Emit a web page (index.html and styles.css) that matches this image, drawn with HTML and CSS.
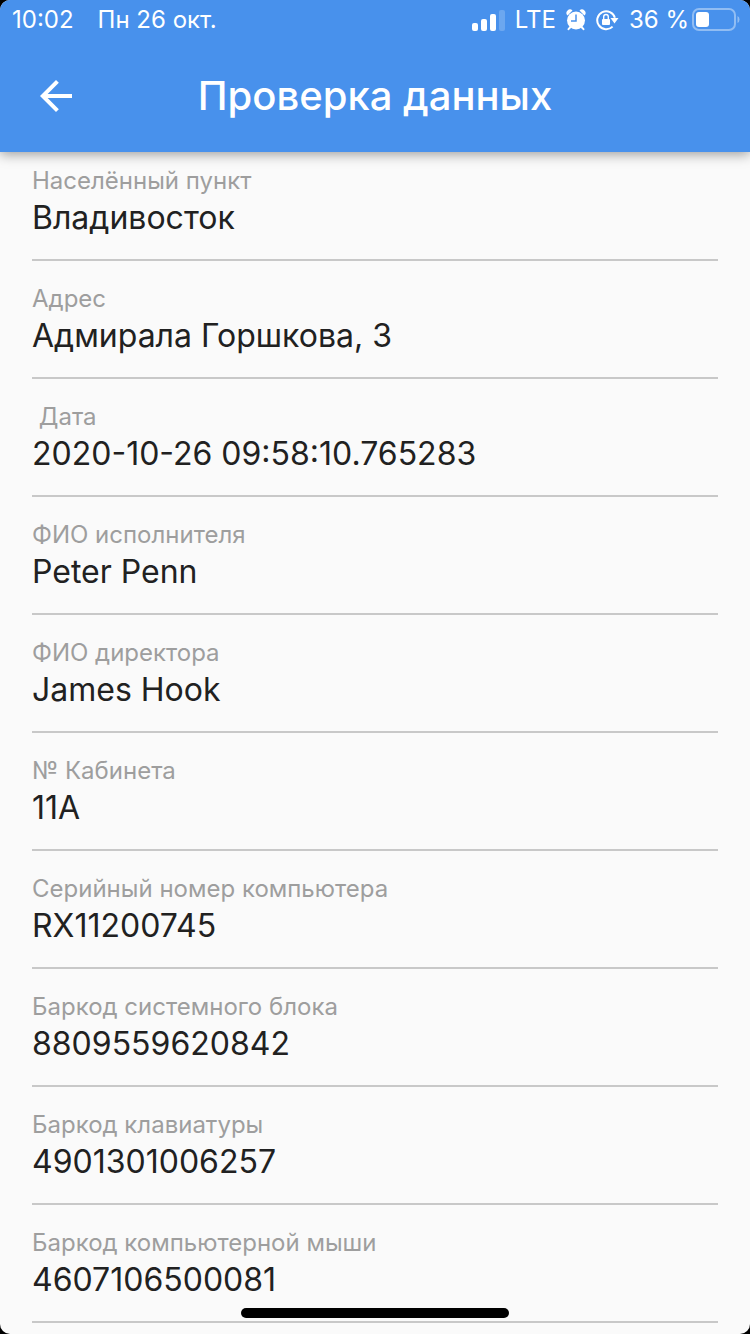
FILE: index.html
```html
<!DOCTYPE html>
<html lang="ru">
<head>
<meta charset="utf-8">
<meta name="viewport" content="width=device-width, initial-scale=1">
<title>Проверка данных</title>
<link rel="stylesheet" href="styles.css">
</head>
<body>
<div class="screen">
  <header class="header">
    <div class="status">
      <div class="status-group status-clock">
        <span>10:02</span>
        <span>Пн 26 окт.</span>
      </div>
      <div class="status-group">
        <svg class="signal" viewBox="0 0 33 22" width="33" height="22" fill="#fff" aria-hidden="true">
          <rect x="0" y="14" width="6" height="8" rx="2"/>
          <rect x="9" y="10" width="6" height="12" rx="2"/>
          <rect x="18" y="5" width="6" height="17" rx="2"/>
          <rect x="27" y="1" width="6" height="21" rx="2" opacity=".2"/>
        </svg>
        <span>LTE</span>
        <svg class="alarm" viewBox="0 0 20 22" width="20" height="22" aria-hidden="true">
          <path d="M1.500 6.500A3.500 3.500 0 0 1 6.500 1.600zM13.500 1.600a3.500 3.500 0 0 1 5 4.900z" fill="#fff"/>
          <path d="M4.500 18 2.500 20.200M15.500 18l2 2.200" stroke="#fff" stroke-width="2" stroke-linecap="round"/>
          <circle cx="10" cy="11.500" r="9" fill="#fff"/>
          <path d="M10 5.500v6.500H5" fill="none" stroke="#4891ec" stroke-width="1.500"/>
        </svg>
        <svg class="lock" viewBox="0 0 23 22" width="23" height="22" aria-hidden="true">
          <path d="M18.900 8.800A9 9 0 1 0 16.600 17.600" fill="none" stroke="#fff" stroke-width="2"/>
          <path d="M14.500 9h8l-4 5.400z" fill="#fff"/>
          <rect x="6" y="10" width="8" height="6" rx="1" fill="#fff"/>
          <path d="M7.700 10V7.800a2.300 2.300 0 0 1 4.600 0V10" fill="none" stroke="#fff" stroke-width="1.400"/>
        </svg>
        <span class="charge">36 %</span>
        <svg class="battery" viewBox="0 0 48 24" width="48" height="24" aria-hidden="true">
          <rect x="1" y="1" width="42" height="21" rx="6" fill="none" stroke="#fff" stroke-width="2" opacity=".4"/>
          <rect x="4" y="4" width="13" height="15" rx="3" fill="#fff"/>
          <path d="M45.500 8q2 .8 2 3.500t-2 3.500z" fill="#fff" opacity=".4"/>
        </svg>
      </div>
    </div>
    <div class="toolbar">
      <button class="back" type="button" aria-label="Назад">
        <svg viewBox="0 0 32 32" width="32" height="32" fill="#fff" aria-hidden="true">
          <path d="M32 14H7.660L18.840 2.820 16 0 0 16l16 16 2.820-2.820L7.660 18H32z"/>
        </svg>
      </button>
      <h1 class="title">Проверка данных</h1>
    </div>
  </header>
  <main>
    <dl class="records">
      <div class="record"><dt>Населённый пункт</dt><dd>Владивосток</dd></div>
      <div class="record"><dt>Адрес</dt><dd>Адмирала Горшкова, 3</dd></div>
      <div class="record"><dt>&nbsp;Дата</dt><dd>2020-10-26 09:58:10.765283</dd></div>
      <div class="record"><dt>ФИО исполнителя</dt><dd>Peter Penn</dd></div>
      <div class="record"><dt>ФИО директора</dt><dd>James Hook</dd></div>
      <div class="record"><dt>№ Кабинета</dt><dd>11A</dd></div>
      <div class="record"><dt>Серийный номер компьютера</dt><dd>RX11200745</dd></div>
      <div class="record"><dt>Баркод системного блока</dt><dd>8809559620842</dd></div>
      <div class="record"><dt>Баркод клавиатуры</dt><dd>4901301006257</dd></div>
      <div class="record"><dt>Баркод компьютерной мыши</dt><dd>4607106500081</dd></div>
    </dl>
  </main>
  <div class="home-indicator"></div>
</div>
</body>
</html>
```
FILE: styles.css
```css
* {
  box-sizing: border-box;
}

body {
  margin: 0;
  background: #000;
  font-family: Inter, "Liberation Sans", sans-serif;
  color: #212121;
}

.screen {
  min-height: 100vh;
  background: #fafafa;
  border-radius: 10px;
  overflow: hidden;
}

.header {
  position: relative;
  background: #4891ec;
  color: #fff;
  box-shadow: 0 2px 12px rgba(0, 0, 0, 0.4);
}

.status {
  display: flex;
  justify-content: space-between;
  align-items: center;
  height: 40px;
  padding: 0 10px 0 12px;
  font-size: 24px;
  line-height: 40px;
}

.status-group {
  display: flex;
  align-items: center;
  gap: 10px;
  white-space: nowrap;
}

.status-clock {
  gap: 24px;
}

.charge {
  margin-right: -7px;
}

.toolbar {
  display: grid;
  grid-template-columns: 112px 1fr 112px;
  align-items: center;
  height: 112px;
}

.back {
  display: flex;
  align-items: center;
  justify-content: center;
  height: 112px;
  padding: 0;
  border: 0;
  background: none;
  cursor: pointer;
}

.title {
  margin: 0;
  font-size: 40px;
  font-weight: 500;
  line-height: 50px;
  text-align: center;
}

.records {
  display: flex;
  flex-direction: column;
  gap: 24px;
  margin: 0;
  padding: 15px 32px 11px;
}

.record {
  padding-bottom: 21px;
  border-bottom: 2px solid #c8c8c8;
}

.record dt {
  font-size: 24px;
  line-height: 28px;
  color: #9e9e9e;
}

.record dd {
  margin: 3px 0 0;
  font-size: 32px;
  line-height: 40px;
}

.home-indicator {
  position: fixed;
  bottom: 16px;
  left: 50%;
  width: 268px;
  height: 10px;
  margin-left: -134px;
  border-radius: 5px;
  background: #000;
}
```
